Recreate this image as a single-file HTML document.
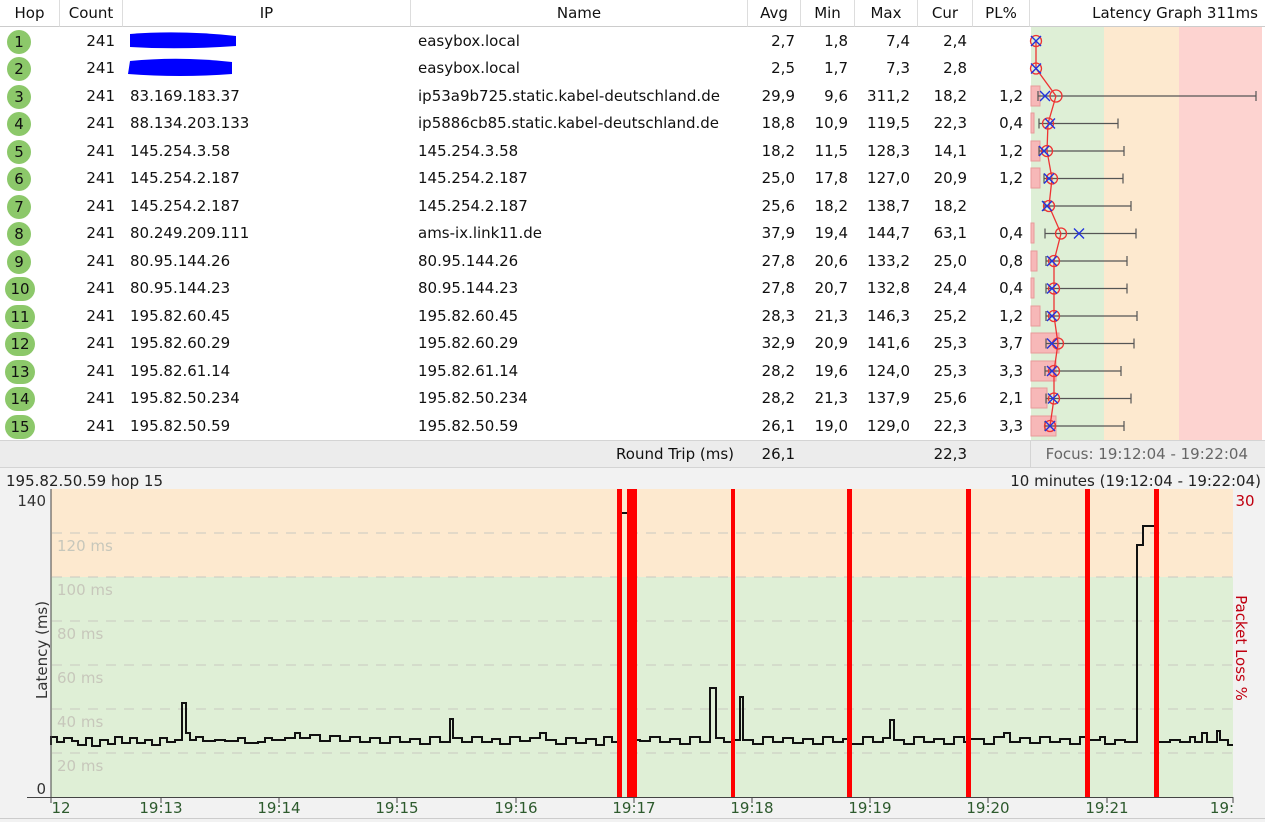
<!DOCTYPE html>
<html><head><meta charset="utf-8"><style>
*{margin:0;padding:0;box-sizing:border-box}
body{width:1265px;height:822px;overflow:hidden;background:#fff;font-family:"DejaVu Sans","Liberation Sans",sans-serif;font-size:15px;color:#111;position:relative}
.a{position:absolute;white-space:nowrap}
.hd{position:absolute;top:0;height:27px;border-right:1px solid #ddd;border-bottom:1px solid #ccc;text-align:center;line-height:27px;background:#fff}
.r{position:absolute;left:0;width:1030px;height:27.5px;line-height:27.5px}
.r span{position:absolute;top:0}
.c{left:7px;top:2px !important;width:24px;height:24px;border-radius:50%;background:#8cc86a;text-align:center;line-height:24px;font-size:15px}
.n{text-align:right}
.r span:nth-child(2){right:915px}
</style></head><body>
<div class="hd" style="left:0;width:60px">Hop</div>
<div class="hd" style="left:60px;width:63px">Count</div>
<div class="hd" style="left:123px;width:288px">IP</div>
<div class="hd" style="left:411px;width:337px">Name</div>
<div class="hd" style="left:748px;width:53px">Avg</div>
<div class="hd" style="left:801px;width:54px">Min</div>
<div class="hd" style="left:855px;width:63px">Max</div>
<div class="hd" style="left:918px;width:55px">Cur</div>
<div class="hd" style="left:973px;width:57px">PL%</div>
<div class="hd" style="left:1030px;width:235px;text-align:right;padding-right:7px;border-right:none">Latency Graph 311ms</div>

<svg class="a" style="left:0;top:0" width="1265" height="441">
<rect x="1031" y="27" width="73" height="413" fill="#deefd6"/>
<rect x="1104" y="27" width="75" height="413" fill="#fde9cf"/>
<rect x="1179" y="27" width="83" height="413" fill="#fdd3d0"/>
<path d="M130 34 Q180 30 236 36 L236 46 Q180 50 130 47Z" fill="#0000ff"/>
<path d="M130 61 Q180 56 232 62 L232 74 Q180 78 128 74Z" fill="#0000ff"/>
<g fill="#f7b8b8" stroke="#e89a9a" stroke-width="1">
<rect x="1031" y="86" width="9" height="20"/><rect x="1031" y="113" width="3" height="20"/><rect x="1031" y="141" width="9" height="20"/><rect x="1031" y="168" width="9" height="20"/>
<rect x="1031" y="223" width="3" height="20"/><rect x="1031" y="251" width="6" height="20"/><rect x="1031" y="278" width="3" height="20"/><rect x="1031" y="306" width="9" height="20"/>
<rect x="1031" y="333" width="28" height="20"/><rect x="1031" y="361" width="25" height="20"/><rect x="1031" y="388" width="16" height="20"/><rect x="1031" y="416" width="25" height="20"/>
</g>
<g stroke="#555" stroke-width="1.2" fill="none">
<path d="M1038 96H1256M1038 91V101M1256 91V101"/>
<path d="M1039 123.5H1118M1039 118.5V128.5M1118 118.5V128.5"/>
<path d="M1039 151H1124M1039 146V156M1124 146V156"/>
<path d="M1044 178.5H1123M1044 173.5V183.5M1123 173.5V183.5"/>
<path d="M1044 206H1131M1044 201V211M1131 201V211"/>
<path d="M1045 233.5H1136M1045 228.5V238.5M1136 228.5V238.5"/>
<path d="M1046 261H1127M1046 256V266M1127 256V266"/>
<path d="M1046 288.5H1127M1046 283.5V293.5M1127 283.5V293.5"/>
<path d="M1046 316H1137M1046 311V321M1137 311V321"/>
<path d="M1046 343.5H1134M1046 338.5V348.5M1134 338.5V348.5"/>
<path d="M1045 371H1121M1045 366V376M1121 366V376"/>
<path d="M1046 398.5H1131M1046 393.5V403.5M1131 393.5V403.5"/>
<path d="M1045 426H1124M1045 421V431M1124 421V431"/>
</g>
<polyline fill="none" stroke="#e33" stroke-width="1.3" points="1036,41 1036,68.5 1056,96 1048,123.5 1047,151 1052,178.5 1049,206 1061,233.5 1054,261 1054,288.5 1054,316 1058,343.5 1054,371 1054,398.5 1050,426"/>
<g fill="none" stroke="#e33" stroke-width="1.3">
<circle cx="1036" cy="41" r="5.5"/><circle cx="1036" cy="68.5" r="5.5"/><circle cx="1056" cy="96" r="6"/><circle cx="1048" cy="123.5" r="5.5"/><circle cx="1047" cy="151" r="5.5"/><circle cx="1052" cy="178.5" r="5.5"/><circle cx="1049" cy="206" r="5.5"/><circle cx="1061" cy="233.5" r="5.5"/><circle cx="1054" cy="261" r="5.5"/><circle cx="1054" cy="288.5" r="5.5"/><circle cx="1054" cy="316" r="5.5"/><circle cx="1058" cy="343.5" r="5.5"/><circle cx="1054" cy="371" r="5.5"/><circle cx="1054" cy="398.5" r="5.5"/><circle cx="1050" cy="426" r="5.5"/>
</g>
<g stroke="#2233dd" stroke-width="1.4">
<path d="M1031 36l10 10m0-10l-10 10"/><path d="M1031 63.5l10 10m0-10l-10 10"/><path d="M1040 91l10 10m0-10l-10 10"/><path d="M1045 118.5l10 10m0-10l-10 10"/><path d="M1039 146l10 10m0-10l-10 10"/><path d="M1044 173.5l10 10m0-10l-10 10"/><path d="M1042 201l10 10m0-10l-10 10"/><path d="M1074 228.5l10 10m0-10l-10 10"/><path d="M1047 256l10 10m0-10l-10 10"/><path d="M1047 283.5l10 10m0-10l-10 10"/><path d="M1047 311l10 10m0-10l-10 10"/><path d="M1047 338.5l10 10m0-10l-10 10"/><path d="M1047 366l10 10m0-10l-10 10"/><path d="M1048 393.5l10 10m0-10l-10 10"/><path d="M1045 421l10 10m0-10l-10 10"/>
</g>
</svg>

<div class="r" style="top:27.5px"><span class="c">1</span><span class="n">241</span><span style="left:418px">easybox.local</span><span class="n" style="right:235px">2,7</span><span class="n" style="right:182px">1,8</span><span class="n" style="right:120px">7,4</span><span class="n" style="right:63px">2,4</span></div>
<div class="r" style="top:55px"><span class="c">2</span><span class="n">241</span><span style="left:418px">easybox.local</span><span class="n" style="right:235px">2,5</span><span class="n" style="right:182px">1,7</span><span class="n" style="right:120px">7,3</span><span class="n" style="right:63px">2,8</span></div>
<div class="r" style="top:82.5px"><span class="c">3</span><span class="n">241</span><span style="left:130px">83.169.183.37</span><span style="left:418px">ip53a9b725.static.kabel-deutschland.de</span><span class="n" style="right:235px">29,9</span><span class="n" style="right:182px">9,6</span><span class="n" style="right:120px">311,2</span><span class="n" style="right:63px">18,2</span><span class="n" style="right:7px">1,2</span></div>
<div class="r" style="top:110px"><span class="c">4</span><span class="n">241</span><span style="left:130px">88.134.203.133</span><span style="left:418px">ip5886cb85.static.kabel-deutschland.de</span><span class="n" style="right:235px">18,8</span><span class="n" style="right:182px">10,9</span><span class="n" style="right:120px">119,5</span><span class="n" style="right:63px">22,3</span><span class="n" style="right:7px">0,4</span></div>
<div class="r" style="top:137.5px"><span class="c">5</span><span class="n">241</span><span style="left:130px">145.254.3.58</span><span style="left:418px">145.254.3.58</span><span class="n" style="right:235px">18,2</span><span class="n" style="right:182px">11,5</span><span class="n" style="right:120px">128,3</span><span class="n" style="right:63px">14,1</span><span class="n" style="right:7px">1,2</span></div>
<div class="r" style="top:165px"><span class="c">6</span><span class="n">241</span><span style="left:130px">145.254.2.187</span><span style="left:418px">145.254.2.187</span><span class="n" style="right:235px">25,0</span><span class="n" style="right:182px">17,8</span><span class="n" style="right:120px">127,0</span><span class="n" style="right:63px">20,9</span><span class="n" style="right:7px">1,2</span></div>
<div class="r" style="top:192.5px"><span class="c">7</span><span class="n">241</span><span style="left:130px">145.254.2.187</span><span style="left:418px">145.254.2.187</span><span class="n" style="right:235px">25,6</span><span class="n" style="right:182px">18,2</span><span class="n" style="right:120px">138,7</span><span class="n" style="right:63px">18,2</span></div>
<div class="r" style="top:220px"><span class="c">8</span><span class="n">241</span><span style="left:130px">80.249.209.111</span><span style="left:418px">ams-ix.link11.de</span><span class="n" style="right:235px">37,9</span><span class="n" style="right:182px">19,4</span><span class="n" style="right:120px">144,7</span><span class="n" style="right:63px">63,1</span><span class="n" style="right:7px">0,4</span></div>
<div class="r" style="top:247.5px"><span class="c">9</span><span class="n">241</span><span style="left:130px">80.95.144.26</span><span style="left:418px">80.95.144.26</span><span class="n" style="right:235px">27,8</span><span class="n" style="right:182px">20,6</span><span class="n" style="right:120px">133,2</span><span class="n" style="right:63px">25,0</span><span class="n" style="right:7px">0,8</span></div>
<div class="r" style="top:275px"><span class="c" style="width:30px;left:5px;border-radius:12px">10</span><span class="n">241</span><span style="left:130px">80.95.144.23</span><span style="left:418px">80.95.144.23</span><span class="n" style="right:235px">27,8</span><span class="n" style="right:182px">20,7</span><span class="n" style="right:120px">132,8</span><span class="n" style="right:63px">24,4</span><span class="n" style="right:7px">0,4</span></div>
<div class="r" style="top:302.5px"><span class="c" style="width:30px;left:5px;border-radius:12px">11</span><span class="n">241</span><span style="left:130px">195.82.60.45</span><span style="left:418px">195.82.60.45</span><span class="n" style="right:235px">28,3</span><span class="n" style="right:182px">21,3</span><span class="n" style="right:120px">146,3</span><span class="n" style="right:63px">25,2</span><span class="n" style="right:7px">1,2</span></div>
<div class="r" style="top:330px"><span class="c" style="width:30px;left:5px;border-radius:12px">12</span><span class="n">241</span><span style="left:130px">195.82.60.29</span><span style="left:418px">195.82.60.29</span><span class="n" style="right:235px">32,9</span><span class="n" style="right:182px">20,9</span><span class="n" style="right:120px">141,6</span><span class="n" style="right:63px">25,3</span><span class="n" style="right:7px">3,7</span></div>
<div class="r" style="top:357.5px"><span class="c" style="width:30px;left:5px;border-radius:12px">13</span><span class="n">241</span><span style="left:130px">195.82.61.14</span><span style="left:418px">195.82.61.14</span><span class="n" style="right:235px">28,2</span><span class="n" style="right:182px">19,6</span><span class="n" style="right:120px">124,0</span><span class="n" style="right:63px">25,3</span><span class="n" style="right:7px">3,3</span></div>
<div class="r" style="top:385px"><span class="c" style="width:30px;left:5px;border-radius:12px">14</span><span class="n">241</span><span style="left:130px">195.82.50.234</span><span style="left:418px">195.82.50.234</span><span class="n" style="right:235px">28,2</span><span class="n" style="right:182px">21,3</span><span class="n" style="right:120px">137,9</span><span class="n" style="right:63px">25,6</span><span class="n" style="right:7px">2,1</span></div>
<div class="r" style="top:412.5px"><span class="c" style="width:30px;left:5px;border-radius:12px">15</span><span class="n">241</span><span style="left:130px">195.82.50.59</span><span style="left:418px">195.82.50.59</span><span class="n" style="right:235px">26,1</span><span class="n" style="right:182px">19,0</span><span class="n" style="right:120px">129,0</span><span class="n" style="right:63px">22,3</span><span class="n" style="right:7px">3,3</span></div>

<div class="a" style="left:0;top:440px;width:1265px;height:28px;background:#ececec;border-top:1px solid #d4d4d4;border-bottom:1px solid #d4d4d4;line-height:26px">
<span class="a" style="right:531px">Round Trip (ms)</span>
<span class="a" style="right:470px">26,1</span>
<span class="a" style="right:298px">22,3</span>
<span class="a" style="left:1030px;width:232px;height:26px;border-left:1px solid #d4d4d4"></span>
<span class="a" style="right:17px;color:#666">Focus: 19:12:04 - 19:22:04</span>
</div>

<div class="a" style="left:0;top:468px;width:1265px;height:354px;background:#f2f2f2"></div>
<div class="a" style="left:6px;top:472px;color:#222">195.82.50.59 hop 15</div>
<div class="a" style="right:4px;top:472px;color:#222">10 minutes (19:12:04 - 19:22:04)</div>
<svg class="a" style="left:0;top:0" width="1265" height="822" font-family="DejaVu Sans, Liberation Sans, sans-serif">
<rect x="51" y="489" width="1182" height="88" fill="#fde9cf"/>
<rect x="51" y="577" width="1182" height="220" fill="#dfefd6"/>
<g stroke="#c9c9c0" stroke-dasharray="10 8" stroke-width="1">
<path d="M52 533H1233M52 577H1233M52 621H1233M52 665H1233M52 709H1233M52 753H1233"/>
</g>
<g fill="#c7c7bb" font-size="15">
<text x="57" y="551">120 ms</text><text x="57" y="595">100 ms</text><text x="57" y="639">80 ms</text><text x="57" y="683">60 ms</text><text x="57" y="727">40 ms</text><text x="57" y="771">20 ms</text>
</g>
<g fill="#ff0000">
<rect x="617" y="489" width="5" height="308"/><rect x="627" y="489" width="10" height="308"/><rect x="731" y="489" width="4" height="308"/><rect x="847" y="489" width="5" height="308"/><rect x="966" y="489" width="5" height="308"/><rect x="1085" y="489" width="5" height="308"/><rect x="1154" y="489" width="5" height="308"/>
</g>
<path fill="none" stroke="#111" stroke-width="2" d="M51 745V737H57V742H64V738H72V741H78V745H86V738H92V746H100V740H108V744H115V737H122V743H130V738H137V743H145V740H152V745H160V738H167V742H175V740H182V703H186V733H190V740H196V737H203V741H215V740H225V741H238V738H245V743H258V742H265V738H272V740H285V738H295V733H300V738H310V735H320V741H330V736H340V741H350V737H360V742H370V738H380V743H390V737H400V742H410V739H420V744H430V737H440V742H450V719H453V738H462V742H472V737H482V742H492V739H500V744H510V737H520V741H530V738H540V733H546V740H556V744H566V738H576V743H586V739H596V745H604V737H612V742H617"/>
<path fill="none" stroke="#111" stroke-width="2" d="M622 513H627"/>
<path fill="none" stroke="#111" stroke-width="2" d="M637 740H640V741H650V737H660V742H670V739H680V744H690V737H700V742H710V688H716V738H724V742H731M735 740H740V697H743V740H753V744H763V737H773V742H783V738H793V743H803V739H813V744H823V737H833V742H843V739H847M852 744H863V737H873V742H883V738H890V720H894V740H904V744H914V737H924V742H934V739H944V744H954V737H964V742H966M971 739H984V744H994V737H1004V733H1010V742H1020V738H1030V743H1040V737H1050V742H1060V739H1070V744H1080V737H1085M1090 740H1100V737H1105V744H1115V740H1125V742H1137V545H1143V526H1154M1159 742H1170V740H1180V742H1190V737H1195V742H1202V733H1207V742H1217V731H1220V740H1228V745H1233"/>
<path stroke="#444" stroke-width="1" d="M51 489V803M27 797.5H1233M1233 797V803M161 797V803M279 797V803M397 797V803M516 797V803M634 797V803M752 797V803M870 797V803M988 797V803M1107 797V803"/>
<g font-size="15" fill="#333"><text x="46" y="506" text-anchor="end">140</text><text x="46" y="794" text-anchor="end">0</text></g>
<text x="1245" y="506" font-size="15" fill="#c00010" text-anchor="middle">30</text>
<text transform="translate(1236,648) rotate(90)" font-size="15" fill="#c00010" text-anchor="middle">Packet Loss %</text>
<text transform="translate(47,650) rotate(-90)" font-size="15" fill="#333" text-anchor="middle">Latency (ms)</text>
<g font-size="15" fill="#2d5a2d" text-anchor="middle">
<text x="61" y="813">12</text><text x="161" y="813">19:13</text><text x="279" y="813">19:14</text><text x="397" y="813">19:15</text><text x="516" y="813">19:16</text><text x="634" y="813">19:17</text><text x="752" y="813">19:18</text><text x="870" y="813">19:19</text><text x="988" y="813">19:20</text><text x="1107" y="813">19:21</text><text x="1222" y="813">19:</text>
</g>
<path stroke="#ccc" d="M0 818.5H1265"/>
</svg>
</body></html>
